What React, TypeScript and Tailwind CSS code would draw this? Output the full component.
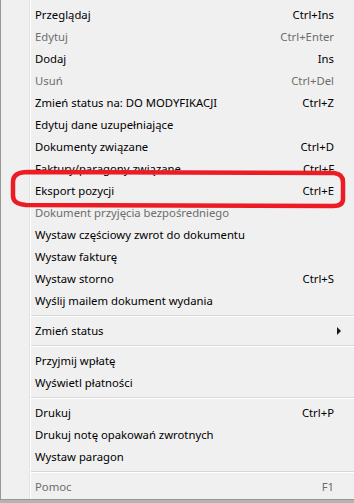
import { Fragment } from 'react';

type Item =
  | { sep: true }
  | { label: string; shortcut?: string; disabled?: boolean; submenu?: boolean; sep?: false };

const items: Item[] = [
  { label: 'Przeglądaj', shortcut: 'Ctrl+Ins' },
  { label: 'Edytuj', shortcut: 'Ctrl+Enter', disabled: true },
  { label: 'Dodaj', shortcut: 'Ins' },
  { label: 'Usuń', shortcut: 'Ctrl+Del', disabled: true },
  { label: 'Zmień status na: DO MODYFIKACJI', shortcut: 'Ctrl+Z' },
  { label: 'Edytuj dane uzupełniające' },
  { label: 'Dokumenty związane', shortcut: 'Ctrl+D' },
  { label: 'Faktury/paragony związane', shortcut: 'Ctrl+F' },
  { label: 'Eksport pozycji', shortcut: 'Ctrl+E' },
  { label: 'Dokument przyjęcia bezpośredniego', disabled: true },
  { label: 'Wystaw częściowy zwrot do dokumentu' },
  { label: 'Wystaw fakturę' },
  { label: 'Wystaw storno', shortcut: 'Ctrl+S' },
  { label: 'Wyślij mailem dokument wydania' },
  { sep: true },
  { label: 'Zmień status', submenu: true },
  { sep: true },
  { label: 'Przyjmij wpłatę' },
  { label: 'Wyświetl płatności' },
  { sep: true },
  { label: 'Drukuj', shortcut: 'Ctrl+P' },
  { label: 'Drukuj notę opakowań zwrotnych' },
  { label: 'Wystaw paragon' },
  { sep: true },
  { label: 'Pomoc', shortcut: 'F1', disabled: true },
];

export default function App() {
  return (
    <div className="relative w-[354px] h-[503px] bg-[#b4b4b4] overflow-hidden font-['Segoe_UI','Noto_Sans',sans-serif] text-[11.3px]">
      {/* Menu */}
      <div className="flex w-[360px] h-[500px] bg-[#f0f0f0] border-l border-b border-[#979797]">
        {/* Icon gutter */}
        <div className="w-[29px] shrink-0 border-r border-[#e2e3e3]" />
        <div className="flex-1 border-l border-white pt-[4px]">
          {items.map((item, i) =>
            item.sep ? (
              <div key={i} className="h-[8px] flex flex-col justify-center pr-[6px]">
                <div className="h-px bg-[#d7d7d7]" />
                <div className="h-px bg-white" />
              </div>
            ) : (
              <Fragment key={i}>
                <div
                  className={`relative flex items-center h-[22px] pl-[4px] pr-[26px] ${
                    item.disabled ? 'text-[#6d6d6d]' : 'text-black'
                  }`}
                >
                  <span className="whitespace-nowrap">{item.label}</span>
                  {item.shortcut && <span className="ml-auto whitespace-nowrap">{item.shortcut}</span>}
                  {item.submenu && (
                    <svg className="absolute right-[18px] top-[7px]" width="5" height="8" viewBox="0 0 5 8">
                      <path d="M0 0 L4 4 L0 8 Z" fill="#1a1a1a" />
                    </svg>
                  )}
                </div>
              </Fragment>
            )
          )}
        </div>
      </div>

      {/* Red annotation around "Eksport pozycji" */}
      <svg className="absolute left-0 top-0 pointer-events-none" width="354" height="503" viewBox="0 0 354 503">
        <path
          d="M28 172 L334 173 Q343 174 343 182 L343 199 Q343 206 333 206 L26 205 Q13 204 13 196 L13 182 Q13 172 28 172 Z"
          fill="none"
          stroke="#ed1c24"
          strokeWidth="4.5"
        />
      </svg>
    </div>
  );
}
